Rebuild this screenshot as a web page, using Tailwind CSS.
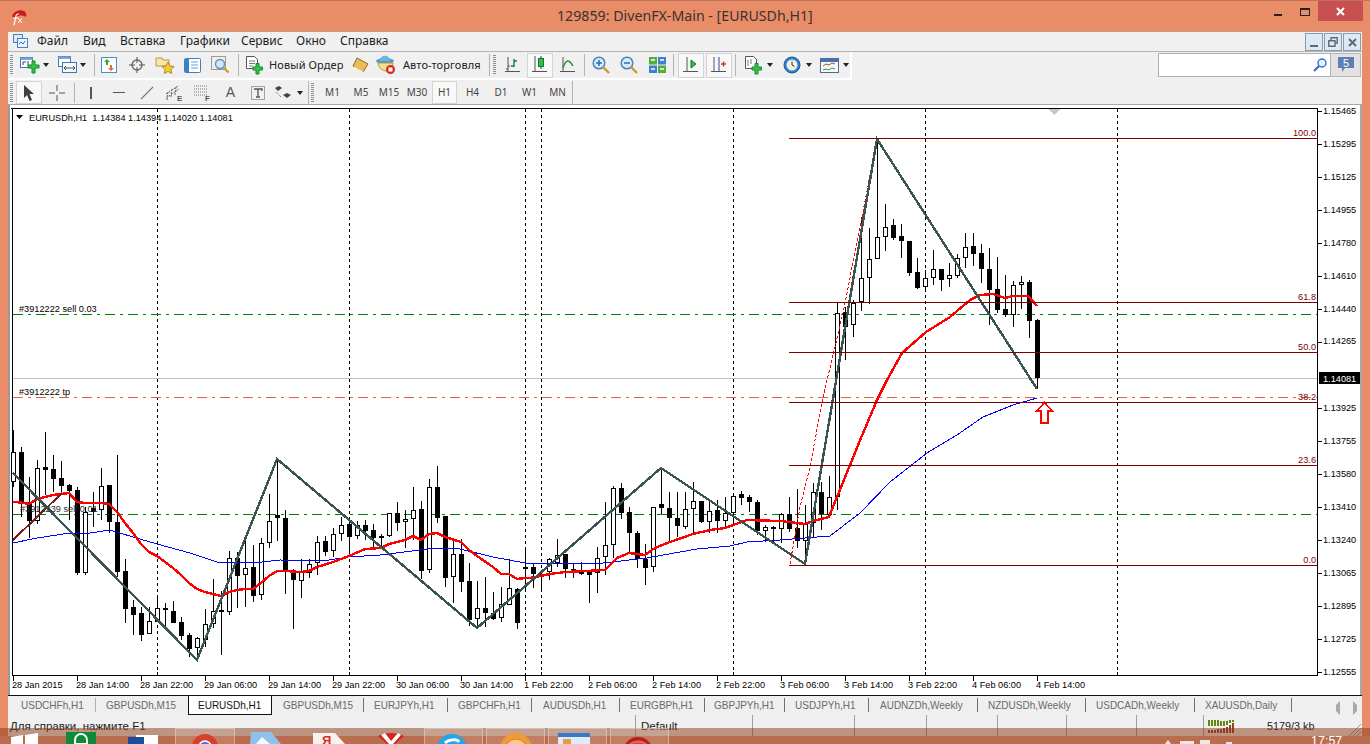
<!DOCTYPE html>
<html lang="ru"><head><meta charset="utf-8"><script src="https://cdn.jsdelivr.net/npm/@tailwindcss/browser@4"></script><title>MT4</title></head>
<body class="m-0 overflow-hidden">
<div class="relative w-[1370px] h-[744px] overflow-hidden bg-[#e98c68] font-['Noto_Sans','Liberation_Sans',sans-serif] text-[#222]">

<!-- title bar -->
<div class="relative flex items-center h-[31px] border-t border-[#c0735a] bg-[#e98c68]">
  <svg class="ml-[9px] w-[18px] h-[18px] mt-[1px]" viewBox="0 0 18 18"><path d="M3 8C5 3 11 1 15 3c2 1 3 4 2 6-3-2-7-2-10 0-1 1-3 1-4-1z" fill="#c8201c"/><path d="M5 17l2-9c0-2 2-2 3-2M4 10h5" stroke="#fff" stroke-width="1.2" fill="none"/><path d="M9 10l4 5M13 10l-4 5" stroke="#fff" stroke-width="1" fill="none"/></svg>
  <div class="absolute left-[557px] top-[6px] text-[14.2px] leading-[18px] text-[#3a3330] whitespace-nowrap">129859: DivenFX-Main - [EURUSDh,H1]</div>
  <div class="absolute left-[1274px] top-[13px] w-[8px] h-[2px] bg-[#222]"></div>
  <div class="absolute left-[1300px] top-[7px] w-[10px] h-[8px] border border-t-2 border-[#222]"></div>
  <div class="absolute left-[1318px] top-0 w-[45px] h-[20px] bg-[#c75050] flex items-center justify-center"><svg class="w-[9px] h-[9px]" viewBox="0 0 9 9"><path d="M1 1l7 7M8 1L1 8" stroke="#fff" stroke-width="2"/></svg></div>
</div>

<div class="ml-[8px] w-[1354px] bg-[#f0f0f0]">
  <!-- menu -->
  <div class="relative flex items-center h-[20px] pb-[2px] text-[12px] leading-[18px] text-[#1c1c1c] border-t border-[#c89a84]">
    <svg class="ml-[5px] w-[15px] h-[15px]" viewBox="0 0 15 15"><rect x=".5" y="1.5" width="9" height="8" fill="#dbe8f6" stroke="#4a7fc0"/><rect x="4.5" y="5.5" width="10" height="9" fill="#eef5fc" stroke="#4a7fc0"/><path d="M6 11l2-2 2 2 2-3" stroke="#2d6db5" fill="none"/></svg>
    <span class="w-[46px] ml-[9px]">Файл</span><span class="w-[37px]">Вид</span><span class="w-[60px]">Вставка</span><span class="w-[61px]">Графики</span><span class="w-[55px]">Сервис</span><span class="w-[44px]">Окно</span><span>Справка</span>
    <div class="absolute right-[1px] top-[1px] flex gap-[1px]">
      <div class="w-[18px] h-[18px] bg-[#dce9f6] border border-[#8c9ba8] flex items-end justify-center pb-[3px]"><div class="w-[8px] h-[2px] bg-[#5e6a75]"></div></div>
      <div class="w-[18px] h-[18px] bg-[#dce9f6] border border-[#8c9ba8] flex items-center justify-center"><svg class="w-[10px] h-[10px]" viewBox="0 0 10 10"><path d="M3 3V.8h6.2V6H7M.8 3.8H7V9.2H.8z" fill="none" stroke="#5e6a75" stroke-width="1.4"/></svg></div>
      <div class="w-[18px] h-[18px] bg-[#dce9f6] border border-[#8c9ba8] flex items-center justify-center"><svg class="w-[9px] h-[9px]" viewBox="0 0 9 9"><path d="M1 1l7 7M8 1L1 8" stroke="#5e6a75" stroke-width="2"/></svg></div>
    </div>
  </div>

  <!-- toolbar 1 -->
  <div class="relative h-[28px] border-t border-[#b4b4b4]">
    <div class="flex items-center w-[844px] h-[28px] border-r-2 border-b-2 border-white text-[11px] tracking-[.1px] text-[#222]">
      <div class="w-[3px] h-[20px] ml-[2px] mr-[6px] bg-[repeating-linear-gradient(to_bottom,#8f8f8f_0,#8f8f8f_1px,transparent_1px,transparent_2px)]"></div>
      <div class="w-[22px] flex justify-center">
        <svg class="w-[20px] h-[19px]" viewBox="0 0 20 19"><rect x=".5" y="1.5" width="12" height="10" fill="#fff" stroke="#3f76b5"/><rect x=".5" y="1.5" width="12" height="2.5" fill="#7ba7d8"/><path d="M3 9V6M3 6h3M8 9V5" stroke="#444"/><path d="M9 8h4V4h3v4h4v3h-4v5h-3v-5H9z" fill="#36c24a" stroke="#118a2a" transform="translate(-1 1)"/></svg>
      </div>
      <div class="w-[10px] flex justify-center"><div class="border-x-[3.5px] border-x-transparent border-t-[4px] border-t-[#222]"></div></div>
      <div class="w-[5px]"></div>
      <div class="w-[22px] flex justify-center">
        <svg class="w-[19px] h-[18px]" viewBox="0 0 19 18"><rect x=".5" y=".5" width="12" height="10" fill="#fff" stroke="#3f76b5"/><rect x=".5" y=".5" width="12" height="2.5" fill="#7ba7d8"/><rect x="4.5" y="6.5" width="14" height="10" fill="#f4f8fd" stroke="#3f76b5"/><path d="M7 12h9M8 10l-2 2 2 2M15 10l2 2-2 2" stroke="#555" fill="none"/></svg>
      </div>
      <div class="w-[10px] flex justify-center"><div class="border-x-[3.5px] border-x-transparent border-t-[4px] border-t-[#222]"></div></div>
      <div class="w-[6px]"></div><div class="w-px h-[22px] bg-[#b4b4b4]"></div>
      <div class="w-[28px] flex justify-center">
        <svg class="w-[16px] h-[16px]" viewBox="0 0 16 16"><rect x=".5" y=".5" width="15" height="15" fill="#fff" stroke="#4d8fc9"/><path d="M5 8V5H3l3-3 3 3H7v3z" fill="#2ea836"/><path d="M9 8v3H7l3 3 3-3h-2V8z" fill="#e8702c"/></svg>
      </div>
      <div class="w-[28px] flex justify-center">
        <svg class="w-[16px] h-[16px]" viewBox="0 0 16 16"><circle cx="8" cy="8" r="5" fill="none" stroke="#666" stroke-width="1.3"/><path d="M8 0v6M8 10v6M0 8h6M10 8h6" stroke="#555"/></svg>
      </div>
      <div class="w-[27px] flex justify-center">
        <svg class="w-[20px] h-[18px]" viewBox="0 0 20 18"><path d="M1 2h6l1 2h6v6H1z" fill="#f6e6a8" stroke="#b89a48"/><path d="M13 6l2 4 4 .5-3 3 .8 4-3.800-2-3.800 2 .8-4-3-3 4-.5z" fill="#f4ca3c" stroke="#b58a1a"/></svg>
      </div>
      <div class="w-[29px] flex justify-center">
        <svg class="w-[17px] h-[15px]" viewBox="0 0 17 15"><rect x=".5" y=".5" width="16" height="14" rx="1" fill="#fff" stroke="#3a80c4"/><rect x="1" y="1" width="4" height="13" fill="#3a80c4"/><path d="M7 4h7M7 7h7M7 10h7" stroke="#6aa0d4"/></svg>
      </div>
      <div class="w-[27px] flex justify-center">
        <svg class="w-[19px] h-[19px]" viewBox="0 0 19 19"><rect x=".5" y=".5" width="14" height="13" fill="#f3efe6" stroke="#9a9a9a"/><circle cx="9" cy="8" r="4.500" fill="#d2e6f6" stroke="#5b93c7" stroke-width="1.400"/><path d="M12.500 11.500l5 5" stroke="#c99a2c" stroke-width="2.200"/></svg>
      </div>
      <div class="w-[4px]"></div><div class="w-px h-[22px] bg-[#b4b4b4]"></div><div class="w-[4px]"></div>
      <div class="w-[22px] flex justify-center">
        <svg class="w-[17px] h-[20px]" viewBox="0 0 17 20"><path d="M.5 1.500h8l3 3v9H.5z" fill="#fff" stroke="#555"/><path d="M3 6h6M3 8.500h6M3 11h4" stroke="#777"/><path d="M7 12h3V8.500h3V12h3.500v3H13v4h-3v-4H7z" fill="#36c24a" stroke="#118a2a"/></svg>
      </div>
      <span class="ml-[4px] w-[80px] whitespace-nowrap">Новый Ордер</span>
      <div class="w-[22px] flex justify-center">
        <svg class="w-[17px] h-[16px]" viewBox="0 0 17 16"><path d="M5 1l11 6-5 8L1 9z" fill="#e9bc58" stroke="#8d6a1e"/><path d="M2 10l9 5" stroke="#fff2c8" stroke-width="1.400"/></svg>
      </div>
      <div class="w-[4px]"></div>
      <div class="w-[22px] flex justify-center">
        <svg class="w-[20px] h-[20px]" viewBox="0 0 20 20"><ellipse cx="9" cy="6" rx="9" ry="3" fill="#4d9bd6"/><path d="M4 6c0-7 10-7 10 0z" fill="#6db4e6"/><path d="M2 8c1 8 10 10 14 6l1-6z" fill="#f6e08c" stroke="#b9983a"/><circle cx="14.500" cy="14.500" r="4.500" fill="#d42a20"/><rect x="12.500" y="12.500" width="4" height="4" fill="#fff"/></svg>
      </div>
      <span class="ml-[6px] w-[86px] whitespace-nowrap">Авто-торговля</span>
      <div class="w-px h-[22px] bg-[#b4b4b4]"></div>
      <div class="w-[3px] h-[20px] ml-[3px] mr-[3px] bg-[repeating-linear-gradient(to_bottom,#8f8f8f_0,#8f8f8f_1px,transparent_1px,transparent_2px)]"></div>
      <div class="w-[26px] flex justify-center ml-[1px]"><svg class="w-[16px] h-[17px]" viewBox="0 0 16 17"><path d="M3 0v14M0 14.500h15" stroke="#555" stroke-width="1"/><path d="M1 12h2M3 9h2" stroke="#555"/><path d="M9 2v8M6 9h3M9 4h3" stroke="#13803a" stroke-width="1.400"/></svg></div>
      <div class="w-[26px] h-[25px] mx-[1px] bg-[#f8f8f8] border border-[#d4d4d4] flex items-center justify-center"><svg class="w-[16px] h-[18px]" viewBox="0 0 16 18"><path d="M3 0v15M0 15.500h15" stroke="#555"/><path d="M9 0v13" stroke="#333"/><rect x="6.500" y="2.500" width="5" height="8" fill="#2fbf45" stroke="#0f7c2a"/></svg></div>
      <div class="w-[28px] flex justify-center"><svg class="w-[16px] h-[16px]" viewBox="0 0 16 16"><path d="M3 0v14M0 14.500h15" stroke="#555"/><path d="M3 11c3-9 6-9 10-2" fill="none" stroke="#2d8a3c" stroke-width="1.400"/></svg></div>
      <div class="w-[2px]"></div><div class="w-px h-[22px] bg-[#b4b4b4]"></div><div class="w-[2px]"></div>
      <div class="w-[28px] flex justify-center"><svg class="w-[18px] h-[18px]" viewBox="0 0 18 18"><circle cx="7" cy="7" r="5.800" fill="#d6eafa" stroke="#4c86ba" stroke-width="1.500"/><path d="M4 7h6M7 4v6" stroke="#2c6ea8" stroke-width="1.500"/><path d="M11 11l6 6" stroke="#c99a2c" stroke-width="2.400"/></svg></div>
      <div class="w-[28px] flex justify-center"><svg class="w-[18px] h-[18px]" viewBox="0 0 18 18"><circle cx="7" cy="7" r="5.800" fill="#d6eafa" stroke="#4c86ba" stroke-width="1.500"/><path d="M4 7h6" stroke="#2c6ea8" stroke-width="1.500"/><path d="M11 11l6 6" stroke="#c99a2c" stroke-width="2.400"/></svg></div>
      <div class="w-[28px] flex justify-center"><svg class="w-[17px] h-[16px]" viewBox="0 0 17 16"><rect width="8" height="7.500" fill="#4fae3c"/><rect x="9" width="8" height="7.500" fill="#3f7fd0"/><rect y="8.500" width="8" height="7.500" fill="#3f7fd0"/><rect x="9" y="8.500" width="8" height="7.500" fill="#4fae3c"/><path d="M2 3h4M11 3h4M2 12h4M11 12h4" stroke="#fff" stroke-width="1.500"/></svg></div>
      <div class="w-[2px]"></div><div class="w-px h-[22px] bg-[#b4b4b4]"></div><div class="w-[4px]"></div>
      <div class="w-[26px] h-[25px] bg-[#f8f8f8] border border-[#d4d4d4] flex items-center justify-center"><svg class="w-[16px] h-[16px]" viewBox="0 0 16 16"><path d="M4 0v14M0 14.500h15" stroke="#555"/><path d="M8 3l5 4-5 4z" fill="#2fbf45" stroke="#0f7c2a"/></svg></div>
      <div class="w-[2px]"></div>
      <div class="w-[26px] h-[25px] bg-[#f8f8f8] border border-[#d4d4d4] flex items-center justify-center"><svg class="w-[16px] h-[16px]" viewBox="0 0 16 16"><path d="M3 0v14M0 14.500h15" stroke="#555"/><path d="M8 0v14" stroke="#234e8f"/><path d="M10 7h5M12.500 4.500v5" stroke="#c23a22" stroke-width="1.400"/></svg></div>
      <div class="w-[3px]"></div><div class="w-px h-[22px] bg-[#b4b4b4]"></div><div class="w-[5px]"></div>
      <div class="w-[24px] flex justify-center"><svg class="w-[17px] h-[20px]" viewBox="0 0 17 20"><path d="M.5 1.500h8l3 3v9H.5z" fill="#fff" stroke="#555"/><path d="M3 5v6M6 4v5" stroke="#777"/><path d="M7 12h3V8.500h3V12h3.500v3H13v4h-3v-4H7z" fill="#36c24a" stroke="#118a2a"/></svg></div>
      <div class="w-[9px] flex justify-center"><div class="border-x-[3.5px] border-x-transparent border-t-[4px] border-t-[#222]"></div></div>
      <div class="w-[6px]"></div>
      <div class="w-[24px] flex justify-center"><svg class="w-[18px] h-[18px]" viewBox="0 0 18 18"><circle cx="9" cy="9" r="8" fill="#2f80cf" stroke="#1b5c9e"/><circle cx="9" cy="9" r="5.500" fill="#f4f1e4"/><path d="M9 5.500V9l2.500 1.500" stroke="#333" fill="none"/></svg></div>
      <div class="w-[9px] flex justify-center"><div class="border-x-[3.5px] border-x-transparent border-t-[4px] border-t-[#222]"></div></div>
      <div class="w-[4px]"></div>
      <div class="w-[24px] flex justify-center"><svg class="w-[19px] h-[15px]" viewBox="0 0 19 15"><rect x=".5" y=".5" width="18" height="14" fill="#f6f8fb" stroke="#556a86"/><rect x="1" y="1" width="17" height="3" fill="#3f74ba"/><path d="M3 8l3-2 3 1 3-2 3 1" stroke="#b5472c" fill="none"/><path d="M3 12l3-1 3 1 3-2 3 1" stroke="#3d9a43" fill="none"/></svg></div>
      <div class="w-[9px] flex justify-center"><div class="border-x-[3.5px] border-x-transparent border-t-[4px] border-t-[#222]"></div></div>
    </div>
    <div class="absolute left-[1150px] top-[1px] w-[173px] h-[24px] bg-white border border-[#b0b0b0] flex items-center justify-end pr-[3px]">
      <svg class="w-[14px] h-[14px]" viewBox="0 0 14 14"><circle cx="9" cy="5" r="4" fill="#eaf3fc" stroke="#2f6fd0" stroke-width="1.400"/><path d="M6 8l-5 5" stroke="#2f6fd0" stroke-width="2.200"/></svg>
    </div>
    <div class="absolute left-[1323px] top-[1px] w-[30px] h-[24px] bg-[#e2e2e2] border-y border-r border-[#b8b8b8] flex items-center justify-center">
      <svg class="w-[18px] h-[18px]" viewBox="0 0 18 18"><path d="M1 1h16v11H8l-3 4v-4H1z" fill="#5f7fb2"/><text x="9" y="10.500" text-anchor="middle" fill="#fff" font-size="11" font-family="Liberation Sans">5</text></svg>
    </div>
  </div>

  <!-- toolbar 2 -->
  <div class="flex items-center h-[26px] pt-[2px] text-[10px] text-[#444] border-b border-[#a8a8a8]">
    <div class="w-[3px] h-[20px] ml-[2px] mr-[3px] bg-[repeating-linear-gradient(to_bottom,#8f8f8f_0,#8f8f8f_1px,transparent_1px,transparent_2px)]"></div>
    <div class="w-[26px] h-[23px] bg-[#f8f8f8] border border-[#d4d4d4] flex items-center justify-center"><svg class="w-[12px] h-[16px]" viewBox="0 0 12 16"><path d="M1 0l10 9H6.500L9 15l-2.500 1L4 10l-3 3z" fill="#3a3f44"/></svg></div>
    <div class="w-[30px] flex justify-center"><svg class="w-[16px] h-[16px]" viewBox="0 0 16 16"><path d="M8 0v6M8 10v6M0 8h6M10 8h6" stroke="#555"/></svg></div>
    <div class="w-[2px]"></div><div class="w-px h-[20px] bg-[#b4b4b4]"></div><div class="w-[2px]"></div>
    <div class="w-[28px] flex justify-center"><div class="w-[1.500px] h-[12px] bg-[#555]"></div></div>
    <div class="w-[28px] flex justify-center"><div class="w-[12px] h-px bg-[#555]"></div></div>
    <div class="w-[28px] flex justify-center"><svg class="w-[14px] h-[14px]" viewBox="0 0 14 14"><path d="M1 13L13 1" stroke="#777" stroke-width="1.100"/></svg></div>
    <div class="w-[28px] flex justify-center"><svg class="w-[22px] h-[18px]" viewBox="0 0 22 18"><path d="M2 10L14 2M2 14L15 5M3 16l1-9M7 13l1-9M11 11l1-9" stroke="#666" stroke-dasharray="2 1"/><text x="13" y="17" font-size="8" font-weight="700" fill="#555" font-family="Liberation Sans">E</text></svg></div>
    <div class="w-[28px] flex justify-center"><svg class="w-[22px] h-[18px]" viewBox="0 0 22 18"><path d="M2 2h13M2 5h13M2 8h13M2 11h13" stroke="#777" stroke-dasharray="1 1"/><text x="13" y="17" font-size="8" font-weight="700" fill="#555" font-family="Liberation Sans">F</text></svg></div>
    <div class="w-[27px] flex justify-center text-[14px] text-[#555] font-['Liberation_Sans']">A</div>
    <div class="w-[28px] flex justify-center"><svg class="w-[14px] h-[14px]" viewBox="0 0 14 14"><rect x=".5" y=".5" width="13" height="13" fill="none" stroke="#555" stroke-dasharray="1 1"/><path d="M3 3h8v2M7 3v8M5 11h4" fill="none" stroke="#555" stroke-width="1.300"/></svg></div>
    <div class="w-[22px] flex justify-center"><svg class="w-[18px] h-[14px]" viewBox="0 0 18 14"><path d="M1 2l4-2 3 2-4 3z" fill="#444"/><path d="M9 9l4-2 4 2-4 3z" fill="#444"/><path d="M2 6l5 5" stroke="#555" stroke-dasharray="1 1"/></svg></div>
    <div class="w-[12px] flex justify-center"><div class="border-x-[3.5px] border-x-transparent border-t-[4px] border-t-[#222]"></div></div>
    <div class="w-[2px]"></div><div class="w-px h-[24px] bg-[#b4b4b4]"></div>
    <div class="w-[3px] h-[20px] ml-[2px] mr-[1px] bg-[repeating-linear-gradient(to_bottom,#8f8f8f_0,#8f8f8f_1px,transparent_1px,transparent_2px)]"></div>
    <div class="w-[29px] text-center ml-[3px]">M1</div><div class="w-[28px] text-center">M5</div><div class="w-[28px] text-center">M15</div><div class="w-[28px] text-center">M30</div>
    <div class="w-[25px] h-[23px] mx-[1px] bg-[#f8f8f8] border border-[#d4d4d4] flex items-center justify-center">H1</div>
    <div class="w-[29px] text-center">H4</div><div class="w-[28px] text-center">D1</div><div class="w-[29px] text-center">W1</div><div class="w-[27px] text-center">MN</div>
    <div class="w-[1px] h-[24px] ml-[1px] bg-[#b4b4b4]"></div>
  </div>

  <!-- chart -->
  <div class="w-[1354px] h-[590px] bg-white">
  <svg class="block" width="1354" height="590" viewBox="8 105 1354 590" shape-rendering="crispEdges" font-family="Liberation Sans" font-size="9.200">
    <rect x="8" y="105" width="2" height="590" fill="#9a9a9a"/>
    <rect x="1360" y="105" width="2" height="590" fill="#a8a8a8"/>
    <path d="M11 108.500H1318M12.500 108V675.500M1317.500 108V676M12 675.500H1318" stroke="#000" fill="none"/>
    <!-- grid -->
    <path d="M157.500 109V675M349.500 109V675M525.500 109V675M541.500 109V675M733.500 109V675M925.500 109V675M1117.500 109V675" stroke="#000" stroke-dasharray="3 3" fill="none"/>
    <!-- price lines -->
    <path d="M13 378.500H1317" stroke="#c0c0c0"/>
    <path d="M13 397.500H1317" stroke="#e8603c" stroke-dasharray="10 5 3 5"/>
    <path d="M13 314.500H1317M13 514.500H1317" stroke="#008000" stroke-dasharray="10 5 3 5"/>
    <!-- wicks -->
    <path stroke="#000" fill="none" d="M13.500 430V487M21.500 447V517M29.500 477V538M37.500 460V524M45.500 432V495M53.500 455V492M61.500 461V493M69.500 484V520M77.500 487V575M85.500 507V575M93.500 492V527M101.500 468V520M109.500 485V533M117.500 455V577M125.500 559V623M133.500 600V635M141.500 607V641M149.500 607V634M157.500 596V622M165.500 603V627M173.500 601V623M181.500 617V640M189.500 633V657M197.500 637V660M205.500 609V647M213.500 579V628M221.500 591V655M229.500 551V615M237.500 552V608M245.500 536V607M253.500 545V602M261.500 538V600M269.500 494V548M277.500 459V541M285.500 510V594M293.500 569V629M301.500 559V598M309.500 559V578M317.500 536V575M325.500 536V556M333.500 528V557M341.500 517V541M349.500 518V557M357.500 521V539M365.500 520V540M373.500 524V547M381.500 534V547M389.500 513V537M397.500 502V531M405.500 510V548M413.500 487V540M421.500 501V579M429.500 479V573M437.500 466V523M445.500 516V587M453.500 538V603M461.500 539V592M469.500 563V626M477.500 581V628M485.500 577V627M493.500 592V620M501.500 587V622M509.500 559V605M517.500 588V629M525.500 547V592M533.500 563V588M541.500 570V590M549.500 558V580M557.500 539V567M565.500 554V578M573.500 563V578M581.500 562V575M589.500 572V603M597.500 547V593M605.500 502V575M613.500 486V558M621.500 483V519M629.500 507V553M637.500 531V568M645.500 544V585M653.500 507V572M661.500 468V514M669.500 492V542M677.500 492V537M685.500 492V529M693.500 482V535M701.500 501V523M709.500 502V533M717.500 500V533M725.500 497V529M733.500 494V525M741.500 491V505M749.500 495V512M757.500 500V535M765.500 525V542M773.500 526V542M781.500 513V543M789.500 497V532M797.500 489V548M805.500 505V557M813.500 483V538M821.500 482V530M829.500 476V515M837.500 302V510M845.500 307V360M853.500 300V337M861.500 217V311M869.500 228V304M877.500 138V259M885.500 204V251M893.500 219V240M901.500 224V258M909.500 241V276M917.500 258V289M925.500 270V292M933.500 250V285M941.500 269V291M949.500 263V287M957.500 254V278M965.500 233V268M973.500 233V266M981.500 244V283M989.500 248V325M997.500 257V313M1005.500 275V317M1013.500 281V327M1021.500 276V309M1029.500 280V338M1037.500 319V388"/>
    <!-- white bodies -->
    <path fill="#fff" stroke="#000" d="M11.500 452.500h4v29h-4zM35.500 468.500h4v52h-4zM83.500 512.500h4v60h-4zM99.500 486.500h4v23h-4zM147.500 621.500h4v12h-4zM155.500 608.500h4v13h-4zM195.500 638.500h4v9h-4zM203.500 624.500h4v15h-4zM211.500 611.500h4v12h-4zM227.500 558.500h4v53h-4zM243.500 568.500h4v6h-4zM259.500 543.500h4v51h-4zM267.500 521.500h4v21h-4zM299.500 572.500h4v8h-4zM307.500 564.500h4v8h-4zM315.500 542.500h4v20h-4zM331.500 534.500h4v16h-4zM339.500 525.500h4v8h-4zM355.500 525.500h4v10h-4zM387.500 513.500h4v22h-4zM403.500 519.500h4v2h-4zM411.500 510.500h4v8h-4zM427.500 487.500h4v82h-4zM451.500 554.500h4v22h-4zM475.500 608.500h4v10h-4zM499.500 604.500h4v13h-4zM507.500 588.500h4v16h-4zM547.500 559.500h4v12h-4zM555.500 555.500h4v7h-4zM595.500 558.500h4v14h-4zM603.500 545.500h4v11h-4zM611.500 488.500h4v56h-4zM651.500 507.500h4v59h-4zM683.500 509.500h4v17h-4zM691.500 501.500h4v7h-4zM707.500 511.500h4v10h-4zM723.500 513.500h4v7h-4zM731.500 496.500h4v16h-4zM763.500 527.500h4v3h-4zM779.500 514.500h4v14h-4zM803.500 523.500h4v17h-4zM811.500 492.500h4v30h-4zM827.500 497.500h4v17h-4zM835.500 313.500h4v183h-4zM851.500 303.500h4v21h-4zM859.500 278.500h4v23h-4zM867.500 259.500h4v18h-4zM875.500 237.500h4v21h-4zM883.500 227.500h4v9h-4zM923.500 278.500h4v8h-4zM931.500 269.500h4v8h-4zM947.500 275.500h4v3h-4zM955.500 258.500h4v17h-4zM963.500 247.500h4v10h-4zM1011.500 285.500h4v29h-4zM1019.500 282.500h4v2h-4z"/>
    <!-- black bodies -->
    <path fill="#000" d="M19 452h5v50h-5zM27 502h5v19h-5zM43 467h5v3h-5zM51 469h5v10h-5zM59 478h5v8h-5zM67 485h5v6h-5zM75 490h5v83h-5zM91 508h5v4h-5zM107 485h5v37h-5zM115 522h5v50h-5zM123 571h5v38h-5zM131 607h5v8h-5zM139 613h5v22h-5zM163 608h5v2h-5zM171 611h5v12h-5zM179 622h5v14h-5zM187 635h5v14h-5zM219 610h5v2h-5zM235 558h5v18h-5zM251 567h5v29h-5zM275 515h5v3h-5zM283 518h5v54h-5zM291 573h5v7h-5zM323 541h5v11h-5zM347 524h5v13h-5zM363 525h5v6h-5zM371 530h5v8h-5zM379 536h5v2h-5zM395 513h5v10h-5zM419 509h5v62h-5zM435 487h5v31h-5zM443 516h5v62h-5zM459 554h5v28h-5zM467 581h5v39h-5zM483 608h5v5h-5zM491 613h5v6h-5zM515 589h5v34h-5zM523 567h5v2h-5zM531 567h5v7h-5zM539 574h5v2h-5zM563 554h5v15h-5zM571 569h5v3h-5zM579 572h5v2h-5zM587 572h5v3h-5zM619 488h5v25h-5zM627 512h5v21h-5zM635 533h5v26h-5zM643 559h5v9h-5zM659 504h5v4h-5zM667 508h5v10h-5zM675 518h5v8h-5zM699 501h5v21h-5zM715 510h5v11h-5zM739 494h5v4h-5zM747 497h5v5h-5zM755 502h5v29h-5zM771 527h5v2h-5zM787 514h5v15h-5zM795 528h5v13h-5zM819 492h5v22h-5zM843 312h5v15h-5zM891 225h5v13h-5zM899 236h5v5h-5zM907 241h5v32h-5zM915 272h5v16h-5zM939 269h5v11h-5zM971 246h5v8h-5zM979 253h5v16h-5zM987 269h5v21h-5zM995 289h5v21h-5zM1003 309h5v6h-5zM1027 282h5v39h-5zM1035 320h5v58h-5z"/>
    <!-- blue MA -->
    <polyline fill="none" stroke="#0000ff" points="13,543 37,538 70,533 90,533 110,530 133,537 157,544 190,553 217,562 253,563 280,560 323,561 348,557 380,555 420,550 437,548 460,549 493,557 525,563 540,563 578,563 603,563 647,558 663,555 697,549 730,546 747,542 780,540 830,536 860,513 890,482 927,453 957,435 983,417 1013,405 1037,398"/>
    <!-- red MA -->
    <polyline fill="none" stroke="#ff0000" stroke-width="2.400" stroke-linejoin="round" points="13,502 21,502.500 29,504 37,499 53,495 61,494 69,493 77,502 85,503 101,503 109,504 117,512 125,523 133,533 141,544 149,552 157,556 165,562 173,568 181,575 189,583 197,589 205,592 213,594 221,596 229,592 237,590 245,589 253,589 261,583 269,576 277,571 285,571 301,572 309,571 317,567 333,562 349,556 365,549 381,548 389,544 405,540 413,536 421,540 429,534 437,533 445,537 461,542 469,550 477,556 493,567 501,574 509,574 517,579 525,578 530,578 550,574 565,572 605,570 617,558 629,553 645,555 655,548 670,542 693,534 710,530 725,528 747,520 780,521 789,522 805,524 813,521 829,517 837,497 861,438 877,400 887,380 902,353 926,332 950,317 970,300 980,295 993,294 1005,298 1013,296 1028,296 1037,306"/>
    <!-- dotted -->
    <polyline fill="none" stroke="#ff0000" stroke-dasharray="3 2" points="790,564 800,507 810,467 823,397 835,347 843,313 862,217 877,139"/>
    <!-- brown short -->
    <path d="M13 540L62 493" stroke="#7a1c1c" stroke-width="2"/>
    <!-- zigzag -->
    <polyline fill="none" stroke="#3a5454" stroke-width="2.400" points="13,473 197,660 277,459 477,628 661,468 805,564 877,139 1037,389"/>
    <!-- fibo -->
    <path d="M789 138.500H1317M789 302.500H1317M789 352.500H1317M789 402.500H1317M789 465.500H1317M789 565.500H1317" stroke="#800000"/>
    <!-- arrow -->
    <path d="M1044.500 402.500l8 8.500h-4.500v12h-7v-12h-4.500z" fill="#fff" stroke="#ff0000" stroke-width="1.600"/>
    <path d="M1049 109h11l-5.500 6z" fill="#c8c8c8"/>
    <!-- ticks -->
    <path stroke="#000" d="M1318 111.500h4M1318 144.500h4M1318 177.500h4M1318 210.500h4M1318 243.500h4M1318 276.500h4M1318 309.500h4M1318 342.500h4M1318 408.500h4M1318 441.500h4M1318 474.500h4M1318 507.500h4M1318 540.500h4M1318 573.500h4M1318 606.500h4M1318 639.500h4M1318 672.500h4M13.500 676v5M77.500 676v5M141.500 676v5M205.500 676v5M269.500 676v5M333.500 676v5M397.500 676v5M461.500 676v5M525.500 676v5M589.500 676v5M653.500 676v5M717.500 676v5M781.500 676v5M845.500 676v5M909.500 676v5M973.500 676v5M1037.500 676v5M157.500 672v3M349.500 672v3M541.500 672v3M733.500 672v3M925.500 672v3M1117.500 672v3"/>
    <g shape-rendering="auto" fill="#000">
      <path d="M16 115h7l-3.500 4z"/>
      <text x="29" y="120.500">EURUSDh,H1&#160; 1.14384 1.14394 1.14020 1.14081</text>
      <text x="19" y="312">#3912222 sell 0.03</text>
      <text x="19" y="395">#3912222 tp</text>
      <text x="20" y="512" fill="#2b2b2b">#3912239 sell 0.01</text>
      <g fill="#800000" text-anchor="end">
        <text x="1316" y="136">100.0</text><text x="1316" y="300">61.8</text><text x="1316" y="350">50.0</text><text x="1316" y="400">38.2</text><text x="1316" y="463">23.6</text><text x="1316" y="563">0.0</text>
      </g>
      <g>
        <text x="1323" y="114">1.15465</text><text x="1323" y="147">1.15295</text><text x="1323" y="180">1.15125</text><text x="1323" y="213">1.14955</text><text x="1323" y="246">1.14780</text><text x="1323" y="279">1.14610</text><text x="1323" y="312">1.14440</text><text x="1323" y="344">1.14265</text><text x="1323" y="411">1.13925</text><text x="1323" y="444">1.13755</text><text x="1323" y="477">1.13580</text><text x="1323" y="510">1.13410</text><text x="1323" y="543">1.13240</text><text x="1323" y="576">1.13065</text><text x="1323" y="609">1.12895</text><text x="1323" y="642">1.12725</text><text x="1323" y="675">1.12555</text>
      </g>
      <rect x="1319" y="372" width="41" height="12" fill="#000"/>
      <text x="1323" y="381.500" fill="#fff">1.14081</text>
      <g>
        <text x="12" y="688">28 Jan 2015</text><text x="76" y="688">28 Jan 14:00</text><text x="140" y="688">28 Jan 22:00</text><text x="204" y="688">29 Jan 06:00</text><text x="268" y="688">29 Jan 14:00</text><text x="332" y="688">29 Jan 22:00</text><text x="396" y="688">30 Jan 06:00</text><text x="460" y="688">30 Jan 14:00</text><text x="524" y="688">1 Feb 22:00</text><text x="588" y="688">2 Feb 06:00</text><text x="652" y="688">2 Feb 14:00</text><text x="716" y="688">2 Feb 22:00</text><text x="780" y="688">3 Feb 06:00</text><text x="844" y="688">3 Feb 14:00</text><text x="908" y="688">3 Feb 22:00</text><text x="972" y="688">4 Feb 06:00</text><text x="1036" y="688">4 Feb 14:00</text>
      </g>
    </g>
  </svg>
  </div>

  <!-- tabs -->
  <div class="relative flex h-[20px] border-t border-[#111] bg-[#efefef] text-[11.5px] leading-[18px] text-[#6a6a6a] font-['Liberation_Sans'] whitespace-nowrap [&>div>span]:inline-block [&>div>span]:origin-left [&>div>span]:scale-x-[.87]">
    <div class="w-[88px] h-[14px] mt-[2px] pl-[13px] leading-[14px] border-r border-[#b0b0b0]"><span>USDCHFh,H1</span></div>
    <div class="w-[92px] h-[14px] mt-[2px] pl-[10px] leading-[14px]"><span>GBPUSDh,M15</span></div>
    <div class="w-[84px] h-[19px] pl-[9px] bg-white border-x border-b border-[#111] text-[#111]"><span>EURUSDh,H1</span></div>
    <div class="w-[92px] h-[14px] mt-[2px] pl-[11px] leading-[14px] border-r border-[#707070]"><span>GBPUSDh,M15</span></div>
    <div class="w-[84px] h-[14px] mt-[2px] pl-[10px] leading-[14px] border-r border-[#707070]"><span>EURJPYh,H1</span></div>
    <div class="w-[84px] h-[14px] mt-[2px] pl-[10px] leading-[14px] border-r border-[#707070]"><span>GBPCHFh,H1</span></div>
    <div class="w-[88px] h-[14px] mt-[2px] pl-[11px] leading-[14px] border-r border-[#707070]"><span>AUDUSDh,H1</span></div>
    <div class="w-[85px] h-[14px] mt-[2px] pl-[10px] leading-[14px] border-r border-[#707070]"><span>EURGBPh,H1</span></div>
    <div class="w-[80px] h-[14px] mt-[2px] pl-[9px] leading-[14px] border-r border-[#707070]"><span>GBPJPYh,H1</span></div>
    <div class="w-[84px] h-[14px] mt-[2px] pl-[10px] leading-[14px] border-r border-[#707070]"><span>USDJPYh,H1</span></div>
    <div class="w-[109px] h-[14px] mt-[2px] pl-[11px] leading-[14px] border-r border-[#707070]"><span>AUDNZDh,Weekly</span></div>
    <div class="w-[108px] h-[14px] mt-[2px] pl-[10px] leading-[14px] border-r border-[#707070]"><span>NZDUSDh,Weekly</span></div>
    <div class="w-[109px] h-[14px] mt-[2px] pl-[10px] leading-[14px] border-r border-[#707070]"><span>USDCADh,Weekly</span></div>
    <div class="w-[97px] h-[14px] mt-[2px] pl-[10px] leading-[14px] border-r border-[#707070]"><span>XAUUSDh,Daily</span></div>
    <div class="ml-[44px] mt-[5px] border-y-[4px] border-y-transparent border-r-[4px] border-r-[#aaa]"></div>
    <div class="ml-[13px] mt-[5px] border-y-[4px] border-y-transparent border-l-[4px] border-l-[#aaa]"></div>
  </div>

  <!-- status -->
  <div class="relative flex items-start h-[21px] bg-[#f0f0f0] text-[11.5px] leading-[16px] text-[#222] font-['Liberation_Sans'] whitespace-nowrap">
    <div class="w-[628px] h-[21px] pl-[2px] pt-[3px] border-r border-[#a0a0a0]">Для справки, нажмите F1</div>
    <div class="w-[117px] h-[21px] pl-[5px] pt-[3px] border-r border-[#a0a0a0]">Default</div>
    <div class="w-[102px] h-[21px] border-r border-[#a0a0a0]"></div>
    <div class="w-[72px] h-[21px] border-r border-[#a0a0a0]"></div>
    <div class="w-[71px] h-[21px] border-r border-[#a0a0a0]"></div>
    <div class="w-[69px] h-[21px] border-r border-[#a0a0a0]"></div>
    <div class="w-[70px] h-[21px] border-r border-[#a0a0a0]"></div>
    <div class="w-[67px] h-[21px] border-r border-[#a0a0a0]"></div>
    <svg class="ml-[4px] mt-[5px] w-[26px] h-[13px]" viewBox="0 0 26 13" shape-rendering="crispEdges"><path d="M1 0v6M4 0v6M7 0v6M10 0v6M13 1v5M16 1v5M19 1v4M22 0v3M25 0v2" stroke="#5f8a10" stroke-width="2"/><path d="M1 10v3M4 10v3M7 10v3M10 9v4M13 9v4M16 8v5M19 7v6M22 5v8M25 3v10" stroke="#9c3a22" stroke-width="2"/></svg>
    <span class="ml-[33px] pt-[3px] text-[10.8px]">5179/3 kb</span>
    <svg class="absolute right-[1px] bottom-0 w-[12px] h-[12px]" viewBox="0 0 12 12"><path d="M12 0L0 12M12 4L4 12M12 8l-4 4" stroke="#9a9a9a"/></svg>
  </div>
</div>

<!-- taskbar -->
<div class="absolute left-0 bottom-0 w-[1370px] h-[8px] bg-[#ec9e88]"></div>
<div class="absolute left-0 bottom-0 w-[1370px] h-[16px] bg-[#883a14]/50">
  <svg class="block" width="1370" height="16" viewBox="0 728 1370 16" font-family="Liberation Sans">
    <path d="M11 737l12-2v9H11zM25 735l13-2v11H25z" fill="#fff"/>
    <rect x="66" y="732" width="30" height="12" fill="#0e8a3a"/><path d="M75 740a6 6 0 0 1 12 0v4H75z" fill="none" stroke="#fff" stroke-width="2"/>
    <rect x="128" y="737" width="30" height="7" fill="#2b5da8"/><rect x="136" y="735" width="22" height="9" fill="#fff"/><rect x="128" y="737" width="16" height="7" fill="#1c4d9c"/>
    <g fill="#ffffff" fill-opacity=".12" stroke="#f2d8cc" stroke-opacity=".55"><rect x="175.500" y="728.500" width="59" height="17"/><rect x="424.500" y="728.500" width="58" height="17"/><rect x="486.500" y="728.500" width="58" height="17"/><rect x="548.500" y="728.500" width="58" height="17"/><rect x="610.500" y="728.500" width="58" height="17"/></g>
    <circle cx="205" cy="747" r="13" fill="#d8402e"/><path d="M205 747l13-2a13 13 0 0 1-5 12z" fill="#f3c11d"/><path d="M205 747l-13 2a13 13 0 0 0 6 10z" fill="#3aa64a"/><circle cx="205" cy="747" r="6" fill="#3a7ed8" stroke="#fff" stroke-width="1.500"/>
    <path d="M251 732h20l10 12h-31z" fill="#8fc2ea"/><path d="M262 737l8 7h-14z" fill="#f4f9fd"/>
    <path d="M313 733h22l10 11h-32z" fill="#f7f2ee"/><text x="322" y="745" font-size="13" fill="#d5301f" font-weight="700">Я</text>
    <path d="M378 736c6-4 20-4 26 0l-9 8h-8z" fill="#d8241c"/><path d="M385 733l6 8 7-8 3 2-8 9h-4l-8-9z" fill="#fff"/>
    <circle cx="452" cy="749" r="15" fill="#22a7e8"/><path d="M445 743c4-4 12-4 14-1" stroke="#fff" stroke-width="3" fill="none"/>
    <circle cx="516" cy="749" r="16" fill="#f09a36"/><circle cx="516" cy="750" r="11" fill="#f8c98a" stroke="#d97f20"/>
    <rect x="558" y="733" width="32" height="11" fill="#dfeafa"/><rect x="558" y="733" width="32" height="4" fill="#3c78c8"/><rect x="563" y="739" width="8" height="5" fill="#e0a040"/>
    <circle cx="638" cy="752" r="15" fill="#b5201c"/><path d="M628 745c5-6 16-6 20 0-6-2-14-2-20 0z" fill="#e6635a"/>
    <path d="M1165 744l3-4 3 4zM1180 741h14v3h-14zM1200 740h10v4h-10zM1226 742h6v2h-6z" fill="#f3e6df"/>
    <text x="1311" y="745" font-size="12.500" fill="#fff">17:57</text>
  </svg>
</div>
</div>
</body></html>
